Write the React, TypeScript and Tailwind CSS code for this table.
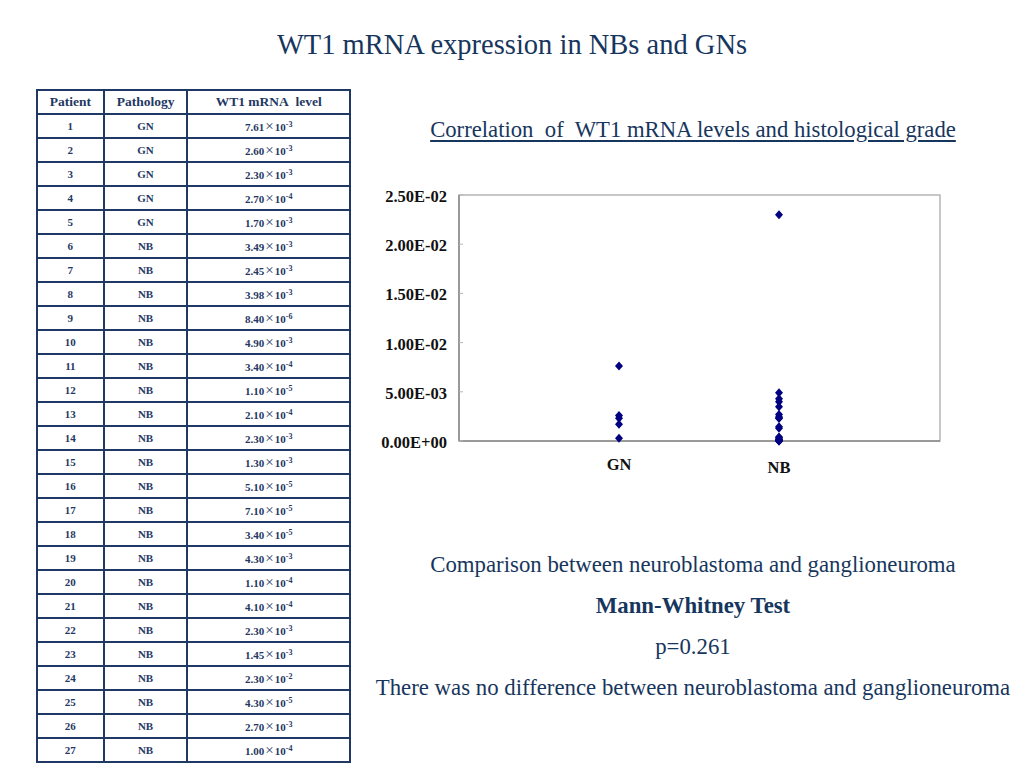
import React from 'react';

const navy = 'text-[#17365d]';

// patient rows: [id, pathology, mantissa, exponent]
const rows: [number, string, string, number][] = [
  [1, 'GN', '7.61', -3],
  [2, 'GN', '2.60', -3],
  [3, 'GN', '2.30', -3],
  [4, 'GN', '2.70', -4],
  [5, 'GN', '1.70', -3],
  [6, 'NB', '3.49', -3],
  [7, 'NB', '2.45', -3],
  [8, 'NB', '3.98', -3],
  [9, 'NB', '8.40', -6],
  [10, 'NB', '4.90', -3],
  [11, 'NB', '3.40', -4],
  [12, 'NB', '1.10', -5],
  [13, 'NB', '2.10', -4],
  [14, 'NB', '2.30', -3],
  [15, 'NB', '1.30', -3],
  [16, 'NB', '5.10', -5],
  [17, 'NB', '7.10', -5],
  [18, 'NB', '3.40', -5],
  [19, 'NB', '4.30', -3],
  [20, 'NB', '1.10', -4],
  [21, 'NB', '4.10', -4],
  [22, 'NB', '2.30', -3],
  [23, 'NB', '1.45', -3],
  [24, 'NB', '2.30', -2],
  [25, 'NB', '4.30', -5],
  [26, 'NB', '2.70', -3],
  [27, 'NB', '1.00', -4],
];

const serif = { fontFamily: '"Liberation Serif", "Times New Roman", serif' };

function DataTable() {
  return (
    <table className="border-collapse border-2 border-[#1f3864] text-[#1f3864] font-bold" style={serif}>
      <thead>
        <tr className="h-[24px] text-[13.5px]">
          <th className="w-[67px] border-2 border-[#1f3864] p-0">Patient</th>
          <th className="w-[84px] border-2 border-[#1f3864] p-0">Pathology</th>
          <th className="w-[164px] border-2 border-[#1f3864] p-0">WT1 mRNA&nbsp; level</th>
        </tr>
      </thead>
      <tbody>
        {rows.map(([id, path, m, e]) => (
          <tr key={id} className="h-[24px] text-[11px] leading-none">
            <td className="border-2 border-[#1f3864] p-0 text-center">{id}</td>
            <td className="border-2 border-[#1f3864] p-0 text-center">{path}</td>
            <td className="border-2 border-[#1f3864] p-0 text-center whitespace-nowrap">
              {m}
              <span className="text-[15px] font-normal px-[1px]">×</span>
              10<span className="text-[8px] relative top-[-4px]">-{Math.abs(e)}</span>
            </td>
          </tr>
        ))}
      </tbody>
    </table>
  );
}

// scatter plot of WT1 levels by pathology
function ScatterChart() {
  const left = 97;
  const right = 578;
  const top = 10;
  const bottom = 256;
  const yOf = (v: number) => bottom - (v / 0.025) * (bottom - top);
  const gnX = 257;
  const nbX = 417;
  const ticks = ['0.00E+00', '5.00E-03', '1.00E-02', '1.50E-02', '2.00E-02', '2.50E-02'];

  const Diamond = ({ x, y }: { x: number; y: number }) => (
    <polygon points={`${x},${y - 4.5} ${x + 4},${y} ${x},${y + 4.5} ${x - 4},${y}`} fill="#000080" />
  );

  return (
    <svg width="662" height="300" className="block">
      <rect x={left} y={top} width={right - left} height={bottom - top} fill="white" stroke="#b5b5b5" strokeWidth="1.5" />
      <line x1={left} y1={top} x2={left} y2={bottom} stroke="#8a8a8a" strokeWidth="1.5" />
      <line x1={left} y1={bottom} x2={right} y2={bottom} stroke="#8a8a8a" strokeWidth="1.5" />
      {ticks.map((t, i) => {
        const y = yOf(i * 0.005);
        return (
          <g key={t}>
            <line x1={left} y1={y} x2={left + 4} y2={y} stroke="#b5b5b5" />
            <text x={85} y={y + 7} textAnchor="end" fontSize="16.5" fontWeight="bold" fill="#111" style={serif}>
              {t}
            </text>
          </g>
        );
      })}
      {rows.map(([id, path, m, e]) => {
        const v = parseFloat(m) * Math.pow(10, e);
        return <Diamond key={id} x={path === 'GN' ? gnX : nbX} y={yOf(v)} />;
      })}
      <text x={gnX} y={285} textAnchor="middle" fontSize="16.5" fontWeight="bold" fill="#111" style={serif}>GN</text>
      <text x={nbX} y={288} textAnchor="middle" fontSize="16.5" fontWeight="bold" fill="#111" style={serif}>NB</text>
    </svg>
  );
}

export default function App() {
  return (
    <div className="w-[1024px] h-[768px] bg-white overflow-hidden flex flex-col" style={serif}>
      <div className={`pt-[30px] h-[60px] text-center text-[28.5px] leading-[30px] ${navy}`}>
        WT1 mRNA expression in NBs and GNs
      </div>
      <div className="flex mt-[29px]">
        <div className="ml-[36px]">
          <DataTable />
        </div>
        <div className={`flex-1 ml-[11px] flex flex-col items-center ${navy}`}>
          <div className="mt-[29px] text-[22.7px] leading-[24px] underline underline-offset-[3px] whitespace-pre">
            Correlation  of  WT1 mRNA levels and histological grade
          </div>
          <div className="mt-[43px] self-stretch">
            <ScatterChart />
          </div>
          <div className="mt-[59px] text-[22.8px] leading-[41px] text-center">
            <div>Comparison between neuroblastoma and ganglioneuroma</div>
            <div className="font-bold">Mann-Whitney Test</div>
            <div>p=0.261</div>
            <div className="whitespace-nowrap">There was no difference between neuroblastoma and ganglioneuroma</div>
          </div>
        </div>
      </div>
    </div>
  );
}
